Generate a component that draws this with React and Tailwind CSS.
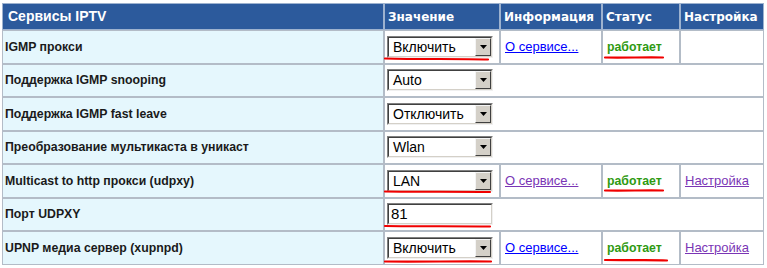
import React from "react";

const arial = "font-['Liberation_Sans',Arial,sans-serif]";
const verdana = "font-['DejaVu_Sans',Verdana,sans-serif]";

function Select({ value }) {
  return (
    <div className="flex h-[22px] w-[106px] border border-t-[#808080] border-l-[#808080] border-b-[#f0f0f0] border-r-[#f0f0f0]">
      <div className="flex flex-1 border border-t-[#404040] border-l-[#404040] border-b-[#d4d0c8] border-r-[#d4d0c8] bg-white">
        <span className={`flex-1 pl-[4px] text-[14px] leading-[18px] text-black ${arial}`}>{value}</span>
        <div className="flex w-[16px] items-center justify-center border border-t-[#f4f4f4] border-l-[#f4f4f4] border-b-[#404040] border-r-[#404040] bg-[#d4d0c8]">
          <svg width="7" height="4" viewBox="0 0 7 4">
            <path d="M0 0h7L3.5 4z" fill="#000" />
          </svg>
        </div>
      </div>
    </div>
  );
}

function PortInput({ value }) {
  return (
    <div className="flex h-[22px] w-[106px] border border-t-[#808080] border-l-[#808080] border-b-[#f0f0f0] border-r-[#f0f0f0]">
      <div className="flex flex-1 border border-t-[#404040] border-l-[#404040] border-b-[#d4d0c8] border-r-[#d4d0c8] bg-white">
        <span className={`pl-[2px] text-[15px] leading-[18px] text-black ${arial}`}>{value}</span>
      </div>
    </div>
  );
}

const rows = [
  { name: "IGMP прокси", ctrl: <Select value="Включить" />, info: "blue", status: true },
  { name: "Поддержка IGMP snooping", ctrl: <Select value="Auto" /> },
  { name: "Поддержка IGMP fast leave", ctrl: <Select value="Отключить" /> },
  { name: "Преобразование мультикаста в уникаст", ctrl: <Select value="Wlan" /> },
  { name: "Multicast to http прокси (udpxy)", ctrl: <Select value="LAN" />, info: "purple", status: true, setup: true },
  { name: "Порт UDPXY", ctrl: <PortInput value="81" /> },
  { name: "UPNP медиа сервер (xupnpd)", ctrl: <Select value="Включить" />, info: "blue", status: true, setup: true },
];

const marks = [
  "M385 58.5 C420 59.5 460 58.5 488 59.5",
  "M605 57.5 C625 58 645 57 663 57.5",
  "M385 191.5 C420 192 460 191.5 490 192",
  "M605 190.5 C625 191 645 190 663 190.5",
  "M385 226 C420 226.5 460 226 490 226.5",
  "M385 261.5 C420 262 460 261 491 261.5",
  "M605 260 C630 260.5 650 259.5 667 260.5",
];

export default function App() {
  const cell = "border border-[#b3bcc7] p-0 align-middle";
  const head = "border border-[#9db2cf] bg-[#2c5a9c] p-0 align-middle text-white";

  return (
    <div className="relative h-[268px] w-[767px] overflow-hidden bg-white pl-[2px] pt-[3px]">
      <table className="w-[762px] table-fixed border-separate border-spacing-0">
        <colgroup>
          <col className="w-[382px]" />
          <col className="w-[116px]" />
          <col className="w-[102px]" />
          <col className="w-[78px]" />
          <col className="w-[84px]" />
        </colgroup>
        <thead>
          <tr className="h-[27px]">
            <th className={`${head} pl-[5px] text-left text-[14px] font-bold ${arial}`}>Сервисы IPTV</th>
            <th className={`${head} pl-[3px] text-left text-[12px] font-bold ${verdana}`}>Значение</th>
            <th className={`${head} pl-[3px] text-left text-[12px] font-bold ${verdana}`}>Информация</th>
            <th className={`${head} pl-[3px] text-left text-[12px] font-bold ${verdana}`}>Статус</th>
            <th className={`${head} pl-[3px] text-left text-[12px] font-bold ${verdana}`}>Настройка</th>
          </tr>
        </thead>
        <tbody>
          {rows.map((r) => (
            <tr key={r.name} className="h-[33.5px]">
              <td className={`${cell} bg-[#e5f7fd] pl-[2px] text-[12.3px] font-bold text-[#1a1a1a] ${arial}`}>{r.name}</td>
              {r.info ? (
                <>
                  <td className={`${cell} pl-[2px]`}>{r.ctrl}</td>
                  <td className={`${cell} pl-[4px] text-[13px] ${arial}`}>
                    <a href="#" className={`underline ${r.info === "blue" ? "text-[#0000ff]" : "text-[#7a35b5]"}`}>О сервисе...</a>
                  </td>
                  <td className={`${cell} pl-[4px] text-[12.3px] font-bold text-[#2f9a12] ${arial}`}>работает</td>
                  <td className={`${cell} pl-[4px] text-[13px] ${arial}`}>
                    {r.setup && <a href="#" className="text-[#7a35b5] underline">Настройка</a>}
                  </td>
                </>
              ) : (
                <td colSpan={4} className={`${cell} pl-[2px]`}>{r.ctrl}</td>
              )}
            </tr>
          ))}
        </tbody>
      </table>

      <svg className="pointer-events-none absolute left-0 top-0" width="767" height="268">
        {marks.map((d) => (
          <path key={d} d={d} stroke="#f00000" strokeWidth="2.2" fill="none" strokeLinecap="round" />
        ))}
      </svg>
    </div>
  );
}
